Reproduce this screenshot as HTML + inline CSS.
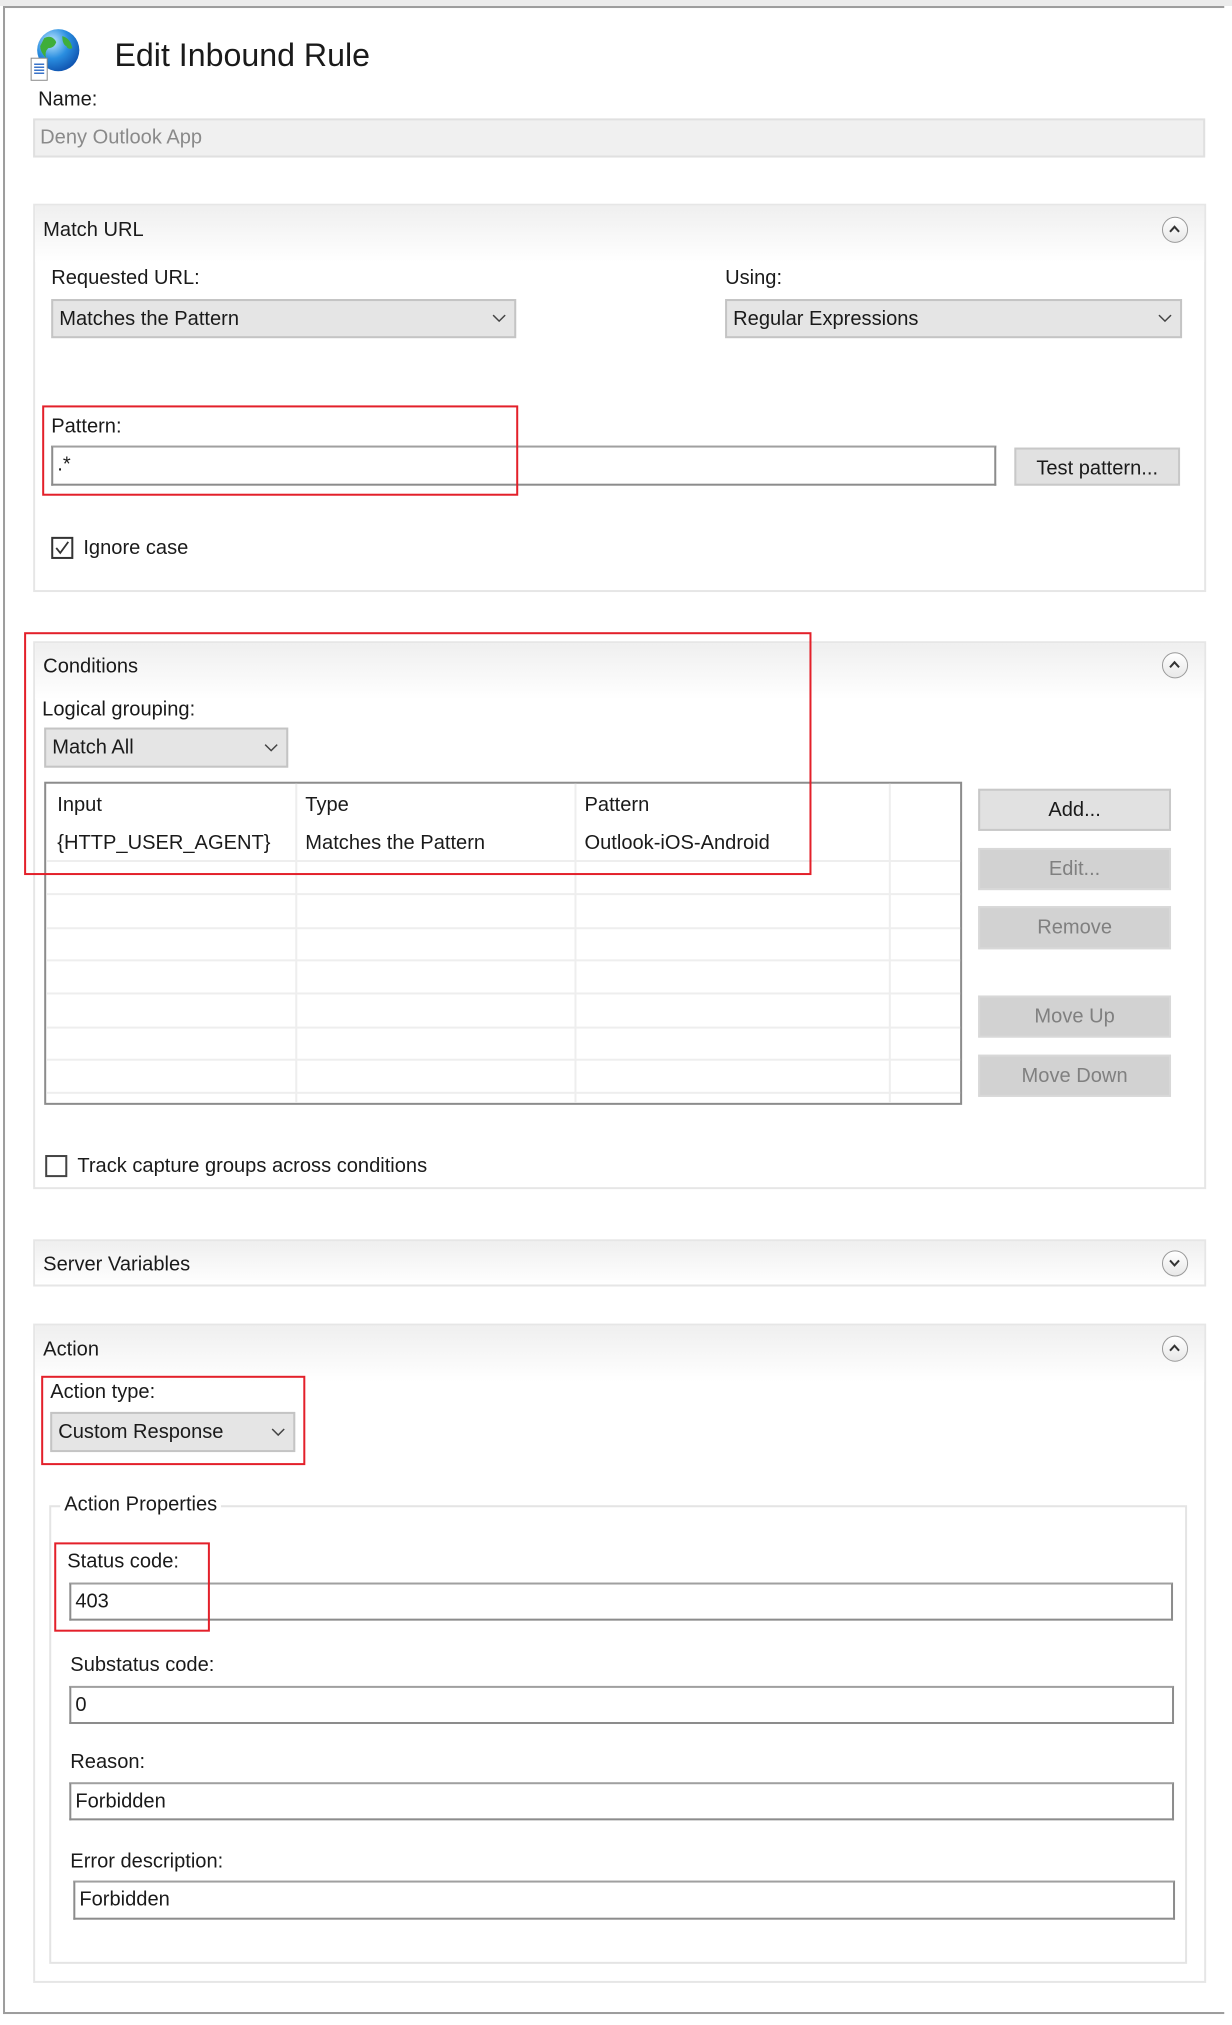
<!DOCTYPE html>
<html><head><meta charset="utf-8"><style>
*{box-sizing:border-box;margin:0;padding:0}
body{width:1232px;height:2018px;background:#fff;position:relative;overflow:hidden;font-family:"Liberation Sans",sans-serif;font-size:20px;color:#1a1a1a}
#w{position:absolute;left:0;top:0;width:1232px;height:2018px;transform:scale(1.0043,1.0035);transform-origin:0 0}
.a{position:absolute}
.t{position:absolute;white-space:nowrap;line-height:24px}
.panel{position:absolute;border:2px solid #e6e6e6;background:#fff}
.hdr{position:absolute;left:0;right:0;top:0;height:56px;background:linear-gradient(#efefef,#fff)}
.circ{position:absolute;width:26px;height:26px;border-radius:50%;border:1.5px solid #9a9a9a;background:linear-gradient(#fff,#e8e8e8)}
.sel{position:absolute;background:#e5e5e5;border:2px solid #c4c4c4;padding-left:6px;line-height:36px}
.inp{position:absolute;background:#fff;border:2px solid #8c8c8c;border-top-color:#a0a0a0;padding-left:4px;line-height:34px}
.btn{position:absolute;background:#e1e1e1;border:2px solid #c8c8c8;text-align:center;line-height:38px}
.dis{background:#d2d2d2;color:#808080;border-color:#d8d8d8}
.red{position:absolute;border:2.5px solid #e3202a}
.chk{position:absolute;width:22px;height:22px;border:2px solid #333;background:#fff}
.hl{position:absolute;height:2px;background:#eeeeee}
.vl{position:absolute;width:2px;background:#eeeeee}
</style></head><body><div id="w">
<div class="a" style="left:0;top:0;width:1232px;height:6px;background:#ececec"></div>
<div class="a" style="left:3px;top:6px;width:1216px;height:2px;background:#9d9d9d"></div>
<div class="a" style="left:3px;top:6px;width:2px;height:2001px;background:#9d9d9d"></div>
<div class="a" style="left:3px;top:2005px;width:1216px;height:2px;background:#9d9d9d"></div>

<svg class="a" style="left:28px;top:28px" width="54" height="56" viewBox="0 0 54 56">
<defs><radialGradient id="g" cx="0.35" cy="0.3" r="0.8"><stop offset="0" stop-color="#bfe8ff"/><stop offset="0.5" stop-color="#2a8ee0"/><stop offset="1" stop-color="#0b4aa8"/></radialGradient></defs>
<circle cx="30" cy="22" r="21" fill="url(#g)"/>
<path d="M16 10 q8 -4 12 4 q-2 6 -8 6 q-4 4 -2 10 q-6 -6 -6 -12z" fill="#3fae3a"/>
<path d="M34 8 q8 2 10 12 q-4 2 -6 -2 q-4 -2 -4 -10z" fill="#3fae3a"/>
<rect x="3" y="30" width="16" height="22" fill="#fff" stroke="#8a8a8a"/>
<path d="M6 36h10M6 39h10M6 42h10M6 45h10" stroke="#3a73c8" stroke-width="1.5"/>
</svg>
<div class="t" style="left:114px;top:36px;font-size:32px;line-height:38px;color:#1a1a1a">Edit Inbound Rule</div>
<div class="t" style="left:38px;top:87px">Name:</div>
<div class="a" style="left:33px;top:118px;width:1167px;height:39px;background:#f0f0f0;border:2px solid #e0e0e0;color:#8a8a8a;padding-left:5px;line-height:34px">Deny Outlook App</div>

<div class="panel" style="left:33px;top:203px;width:1168px;height:387px">
<div class="hdr"></div>
<div class="t" style="left:8px;top:12px">Match URL</div>
<div class="circ" style="left:1122px;top:11px"><svg width="23" height="23"><path d="M7 14l4.5-5 4.5 5" stroke="#333" stroke-width="2" fill="none"/></svg></div>
</div>
<div class="t" style="left:51px;top:265px">Requested URL:</div>
<div class="sel" style="left:51px;top:298px;width:463px;height:39px">Matches the Pattern<svg class="a" style="right:8px;top:13px" width="14" height="9"><path d="M1 1l6 6 6-6" stroke="#444" stroke-width="1.5" fill="none"/></svg></div>
<div class="t" style="left:722px;top:265px">Using:</div>
<div class="sel" style="left:722px;top:298px;width:455px;height:39px">Regular Expressions<svg class="a" style="right:8px;top:13px" width="14" height="9"><path d="M1 1l6 6 6-6" stroke="#444" stroke-width="1.5" fill="none"/></svg></div>
<div class="t" style="left:51px;top:413px">Pattern:</div>
<div class="inp" style="left:51px;top:444px;width:941px;height:40px">.*</div>
<div class="btn" style="left:1010px;top:446px;width:165px;height:38px">Test pattern...</div>
<div class="red" style="left:42px;top:404px;width:474px;height:90px"></div>
<div class="chk" style="left:51px;top:535px"><svg width="18" height="18"><path d="M3 9l4 5 8-11" stroke="#333" stroke-width="1.8" fill="none"/></svg></div>
<div class="t" style="left:83px;top:534px">Ignore case</div>

<div class="panel" style="left:33px;top:639px;width:1168px;height:546px">
<div class="hdr"></div>
<div class="t" style="left:8px;top:11px">Conditions</div>
<div class="circ" style="left:1122px;top:9px"><svg width="23" height="23"><path d="M7 14l4.5-5 4.5 5" stroke="#333" stroke-width="2" fill="none"/></svg></div>
</div>
<div class="t" style="left:42px;top:695px">Logical grouping:</div>
<div class="sel" style="left:44px;top:725px;width:243px;height:40px">Match All<svg class="a" style="right:8px;top:14px" width="14" height="9"><path d="M1 1l6 6 6-6" stroke="#444" stroke-width="1.5" fill="none"/></svg></div>
<div class="a" style="left:44px;top:779px;width:914px;height:322px;border:2px solid #8c8c8c;background:#fff"></div>
<div class="vl" style="left:294px;top:781px;height:318px"></div>
<div class="vl" style="left:572px;top:781px;height:318px"></div>
<div class="vl" style="left:885px;top:781px;height:318px"></div>
<div class="hl" style="left:46px;top:857px;width:910px"></div>
<div class="hl" style="left:46px;top:890px;width:910px"></div>
<div class="hl" style="left:46px;top:924px;width:910px"></div>
<div class="hl" style="left:46px;top:956px;width:910px"></div>
<div class="hl" style="left:46px;top:989px;width:910px"></div>
<div class="hl" style="left:46px;top:1023px;width:910px"></div>
<div class="hl" style="left:46px;top:1055px;width:910px"></div>
<div class="hl" style="left:46px;top:1088px;width:910px"></div>
<div class="t" style="left:57px;top:790px">Input</div>
<div class="t" style="left:304px;top:790px">Type</div>
<div class="t" style="left:582px;top:790px">Pattern</div>
<div class="t" style="left:57px;top:828px">{HTTP_USER_AGENT}</div>
<div class="t" style="left:304px;top:828px">Matches the Pattern</div>
<div class="t" style="left:582px;top:828px">Outlook-iOS-Android</div>
<div class="red" style="left:24px;top:630px;width:784px;height:242px"></div>
<div class="btn" style="left:974px;top:786px;width:192px;height:42px;line-height:38px">Add...</div>
<div class="btn dis" style="left:974px;top:845px;width:192px;height:42px;line-height:38px">Edit...</div>
<div class="btn dis" style="left:974px;top:903px;width:192px;height:43px;line-height:39px">Remove</div>
<div class="btn dis" style="left:974px;top:992px;width:192px;height:42px;line-height:38px">Move Up</div>
<div class="btn dis" style="left:974px;top:1051px;width:192px;height:42px;line-height:38px">Move Down</div>
<div class="chk" style="left:45px;top:1151px;border-color:#444"></div>
<div class="t" style="left:77px;top:1150px">Track capture groups across conditions</div>

<div class="panel" style="left:33px;top:1235px;width:1168px;height:47px">
<div class="hdr" style="height:43px"></div>
<div class="t" style="left:8px;top:11px">Server Variables</div>
<div class="circ" style="left:1122px;top:9px"><svg width="23" height="23"><path d="M7 9l4.5 5 4.5-5" stroke="#333" stroke-width="2" fill="none"/></svg></div>
</div>

<div class="panel" style="left:33px;top:1319px;width:1168px;height:657px">
<div class="hdr"></div>
<div class="t" style="left:8px;top:12px">Action</div>
<div class="circ" style="left:1122px;top:10px"><svg width="23" height="23"><path d="M7 14l4.5-5 4.5 5" stroke="#333" stroke-width="2" fill="none"/></svg></div>
</div>
<div class="t" style="left:50px;top:1375px">Action type:</div>
<div class="sel" style="left:50px;top:1407px;width:244px;height:40px">Custom Response<svg class="a" style="right:8px;top:14px" width="14" height="9"><path d="M1 1l6 6 6-6" stroke="#444" stroke-width="1.5" fill="none"/></svg></div>
<div class="red" style="left:41px;top:1371px;width:263px;height:89px"></div>
<div class="a" style="left:49px;top:1500px;width:1133px;height:457px;border:2px solid #e4e4e4"></div>
<div class="t" style="left:60px;top:1487px;background:#fff;padding:0 4px">Action Properties</div>
<div class="t" style="left:67px;top:1544px">Status code:</div>
<div class="inp" style="left:69px;top:1577px;width:1099px;height:38px">403</div>
<div class="red" style="left:54px;top:1537px;width:155px;height:89px"></div>
<div class="t" style="left:70px;top:1647px">Substatus code:</div>
<div class="inp" style="left:69px;top:1680px;width:1100px;height:38px">0</div>
<div class="t" style="left:70px;top:1744px">Reason:</div>
<div class="inp" style="left:69px;top:1776px;width:1100px;height:38px">Forbidden</div>
<div class="t" style="left:70px;top:1843px">Error description:</div>
<div class="inp" style="left:73px;top:1874px;width:1097px;height:39px">Forbidden</div>
</div></body></html>
